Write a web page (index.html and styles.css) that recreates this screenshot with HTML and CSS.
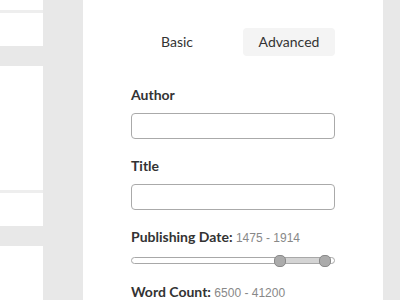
FILE: index.html
```html
<!DOCTYPE html>
<html>
<head>
<meta charset="utf-8">
<link rel="stylesheet" href="styles.css">
</head>
<body>
<div class="page">
  <div class="side">
    <div class="card"><div class="white h10"></div><div class="divider"></div><div class="white h33"></div></div>
    <div class="card"><div class="white h124"></div><div class="divider"></div><div class="white h33"></div></div>
    <div class="card"><div class="white h60"></div></div>
  </div>
  <div class="gutter"></div>
  <div class="panel">
    <div class="tabs">
      <div class="tab">Basic</div>
      <div class="tab active">Advanced</div>
    </div>
    <div class="field">
      <label class="label">Author</label>
      <input class="input" type="text">
    </div>
    <div class="field">
      <label class="label">Title</label>
      <input class="input" type="text">
    </div>
    <div class="field">
      <div class="label">Publishing Date: <span class="value">1475 - 1914</span></div>
      <div class="slider">
        <div class="track"></div>
        <div class="range" style="left:149px;width:45px"></div>
        <div class="handle" style="left:143px"></div>
        <div class="handle" style="left:188px"></div>
      </div>
    </div>
    <div class="field wc">
      <div class="label">Word Count: <span class="value">6500 - 41200</span></div>
    </div>
  </div>
</div>
</body>
</html>
```
FILE: styles.css
```css
html, body {
  margin: 0;
  padding: 0;
  background: #e8e8e8;
  height: 300px;
  overflow: hidden;
}
.page {
  display: flex;
  height: 300px;
  font-family: Lato, "Liberation Sans", sans-serif;
  color: #333;
}
.side {
  width: 43px;
  display: flex;
  flex-direction: column;
  gap: 20px;
}
.white { background: #fff; }
.divider { height: 3px; background: #eeeeee; }
.h10 { height: 10px; }
.h33 { height: 33px; }
.h124 { height: 124px; }
.h60 { height: 60px; }
.gutter { width: 40px; }
.panel {
  width: 300px;
  background: #fff;
  padding: 28px 48px 0 48px;
  box-sizing: border-box;
}
.tabs {
  display: flex;
  gap: 20px;
  margin-bottom: 29px;
}
.tab {
  width: 92px;
  height: 28px;
  line-height: 28px;
  text-align: center;
  font-size: 14px;
  border-radius: 4px;
  color: #333;
}
.tab.active { background: #f4f4f4; }
.field {
  display: flex;
  flex-direction: column;
  margin-bottom: 17px;
}
.label {
  font-size: 14px;
  font-weight: 700;
  line-height: 20px;
  color: #333;
}
.value {
  font-family: "Liberation Sans", Arial, sans-serif;
  font-weight: 400;
  font-size: 12px;
  color: #888;
}
.input {
  margin: 8px 0 0 0;
  height: 26px;
  box-sizing: border-box;
  border: 1px solid #aaa;
  border-radius: 4px;
  padding: 0 6px;
  font: inherit;
}
.slider {
  position: relative;
  margin-top: 7px;
  height: 12px;
}
.track {
  position: absolute;
  left: 0;
  right: 0;
  top: 2px;
  height: 7px;
  box-sizing: border-box;
  border: 1px solid #a8a8a8;
  border-radius: 4px;
  background: #fff;
}
.range {
  position: absolute;
  top: 2px;
  height: 7px;
  box-sizing: border-box;
  background: #d4d4d4;
  border-top: 1px solid #a8a8a8;
  border-bottom: 1px solid #a8a8a8;
}
.handle {
  position: absolute;
  top: 0;
  width: 12px;
  height: 12px;
  box-sizing: border-box;
  border: 1px solid #8a8a8a;
  border-radius: 5px;
  background: #ababab;
}
.wc { margin-top: -2px; }
```
